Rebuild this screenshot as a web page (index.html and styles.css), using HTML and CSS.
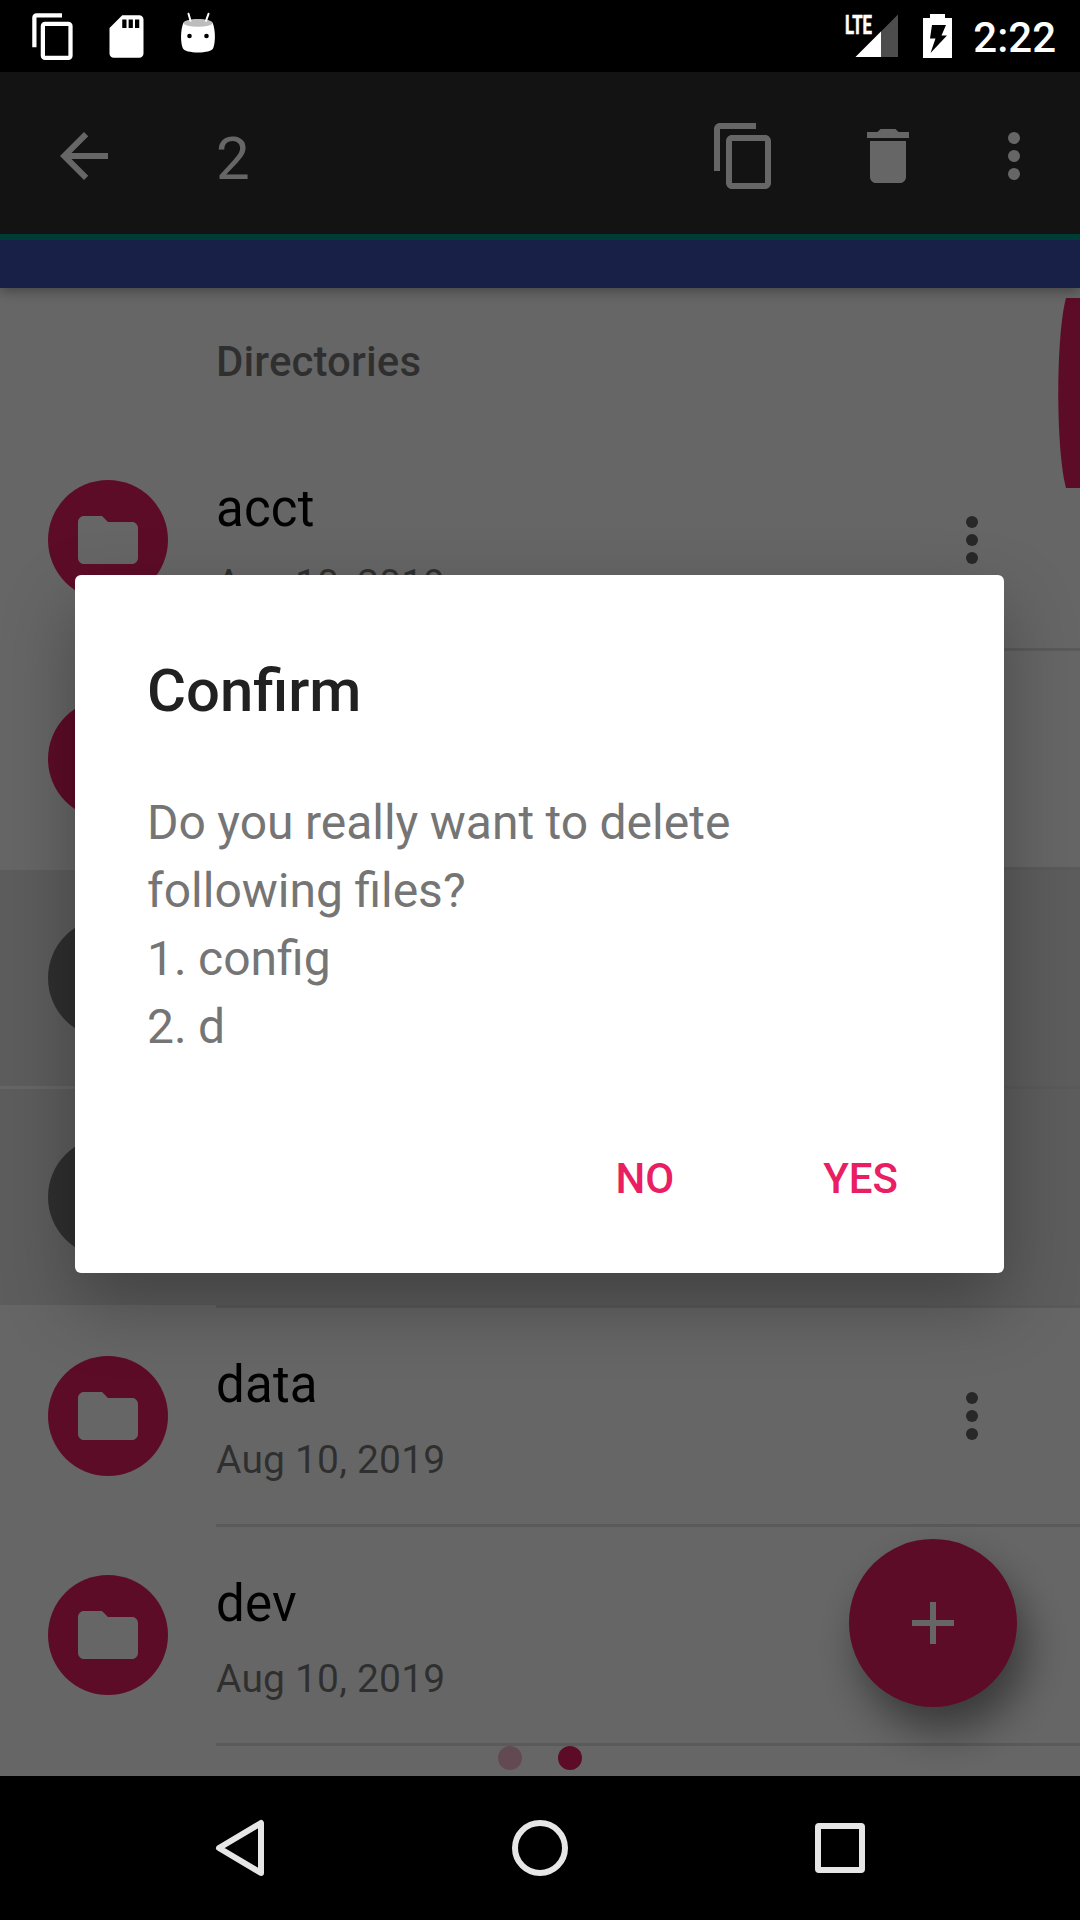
FILE: index.html
```html
<!DOCTYPE html>
<html lang="en">
<head>
<meta charset="utf-8">
<title>Confirm</title>
<link rel="stylesheet" href="styles.css">
</head>
<body>
<svg class="defs" width="0" height="0" aria-hidden="true">
  <symbol id="copy" viewBox="0 0 24 24"><path d="M16 1H4c-1.100 0-2 .9-2 2v14h2V3h12V1zm3 4H8c-1.100 0-2 .9-2 2v14c0 1.100.9 2 2 2h11c1.100 0 2-.9 2-2V7c0-1.100-.9-2-2-2zm0 16H8V7h11v14z"/></symbol>
  <symbol id="more" viewBox="0 0 24 24"><circle cx="12" cy="6" r="2"/><circle cx="12" cy="12" r="2"/><circle cx="12" cy="18" r="2"/></symbol>
  <symbol id="folder" viewBox="0 0 24 24"><path d="M10 4H4c-1.100 0-2 .9-2 2v12c0 1.100.9 2 2 2h16c1.100 0 2-.9 2-2V8c0-1.100-.9-2-2-2h-8l-2-2z"/></symbol>
  <symbol id="check" viewBox="0 0 24 24"><path d="M9 16.200 4.800 12l-1.400 1.400L9 19 21 7l-1.400-1.400z"/></symbol>
</svg>

<header class="status">
  <div class="status-group notifications">
    <svg class="note-icon"><use href="#copy"/></svg>
    <svg class="note-icon" viewBox="0 0 24 24"><path d="M18 2h-8L4 8v12c0 1.100.9 2 2 2h12c1.100 0 2-.9 2-2V4c0-1.100-.9-2-2-2zm-6 6h-2V4h2v4zm3 0h-2V4h2v4zm3 0h-2V4h2v4z"/></svg>
    <svg class="marshmallow" viewBox="0 0 36 42">
      <path d="M3.300 11C8 6 28 6 32.700 11C35.500 18 35.600 30 33.300 36C31.500 42 4.500 42 2.700 36C.4 30 .5 18 3.300 11z"/>
      <ellipse cx="18" cy="11" rx="14.500" ry="3.800" fill="#bdbdbd"/>
      <path d="M8.500 1.800l2 7M28.500 1.800l-2.500 7" stroke="#fff" stroke-width="2" stroke-linecap="round"/>
      <circle cx="9.500" cy="24" r="2.300" fill="#000"/><circle cx="26.500" cy="24" r="2.300" fill="#000"/>
    </svg>
  </div>
  <div class="status-group">
    <svg class="signal" viewBox="0 0 54 44">
      <path d="M53 0.500V43H10.500z" fill="#4d4d4d"/>
      <path d="M36 17.500V43H10.500z"/>
      <text class="lte" x="0" y="19.500" textLength="27" lengthAdjust="spacingAndGlyphs">LTE</text>
    </svg>
    <svg class="battery" viewBox="0 0 29 44">
      <path d="M7 0h15v4h7v40H0V4h7z"/>
      <path d="M9 11h14l-4.500 10.500H24L7.500 39l5-14.500H7z" fill="#000"/>
    </svg>
    <span class="clock">2:22</span>
  </div>
</header>

<main class="screen">
  <div class="appbar">
    <div class="toolbar">
      <svg class="icon" viewBox="0 0 24 24"><path d="M20 11H7.830l5.590-5.590L12 4l-8 8 8 8 1.410-1.410L7.830 13H20v-2z"/></svg>
      <span class="count">2</span>
      <svg class="icon"><use href="#copy"/></svg>
      <svg class="icon delete" viewBox="0 0 24 24"><path d="M6 19c0 1.100.9 2 2 2h8c1.100 0 2-.9 2-2V7H6v12zM19 4h-3.500l-1-1h-5l-1 1H5v2h14V4z"/></svg>
      <svg class="icon overflow"><use href="#more"/></svg>
    </div>
    <div class="path-bar"></div>
  </div>

  <div class="list">
    <h2 class="section">Directories</h2>
    <div class="row">
      <span class="avatar"><svg class="icon"><use href="#folder"/></svg></span>
      <div class="labels"><span class="name">acct</span><span class="date">Aug 10, 2019</span></div>
      <svg class="icon row-menu"><use href="#more"/></svg>
    </div>
    <div class="divider"></div>
    <div class="row">
      <span class="avatar"></span>
    </div>
    <div class="divider"></div>
    <div class="row selected">
      <span class="avatar"><svg class="icon"><use href="#check"/></svg></span>
    </div>
    <div class="divider"></div>
    <div class="row selected">
      <span class="avatar"><svg class="icon"><use href="#check"/></svg></span>
    </div>
    <div class="divider"></div>
    <div class="row">
      <span class="avatar"><svg class="icon"><use href="#folder"/></svg></span>
      <div class="labels"><span class="name">data</span><span class="date">Aug 10, 2019</span></div>
      <svg class="icon row-menu"><use href="#more"/></svg>
    </div>
    <div class="divider"></div>
    <div class="row">
      <span class="avatar"><svg class="icon"><use href="#folder"/></svg></span>
      <div class="labels"><span class="name">dev</span><span class="date">Aug 10, 2019</span></div>
    </div>
    <div class="divider"></div>
  </div>

  <svg class="scroll-handle" viewBox="0 0 22 190"><path d="M22 0H8C-2.300 38-2.300 152 8 190H22z"/></svg>
  <div class="pager"><span class="dot"></span><span class="dot active"></span></div>
  <div class="fab"><svg class="icon" viewBox="0 0 24 24"><path d="M19 13h-6v6h-2v-6H5v-2h6V5h2v6h6v2z"/></svg></div>

  <div class="scrim">
    <section class="dialog" role="dialog">
      <h1 class="dialog-title">Confirm</h1>
      <p class="message">Do you really want to delete<br>following files?<br>1. config<br>2. d</p>
      <div class="actions"><span>NO</span><span>YES</span></div>
    </section>
  </div>
</main>

<nav class="navbar">
  <svg class="icon" viewBox="0 0 72 72"><path d="M15 36 57 11V61z"/></svg>
  <svg class="icon" viewBox="0 0 72 72"><circle cx="36" cy="36" r="25"/></svg>
  <svg class="icon" viewBox="0 0 72 72"><rect x="14" y="14" width="44" height="44" rx="1"/></svg>
</nav>
</body>
</html>
```
FILE: styles.css
```css
* { box-sizing: border-box; }

body {
  margin: 0;
  width: 1080px;
  height: 1920px;
  display: flex;
  flex-direction: column;
  overflow: hidden;
  background: #000;
  font-family: Roboto, "Noto Sans", sans-serif;
}

h1, h2, p { margin: 0; font-weight: 400; }
svg { display: block; flex: none; }
.defs { position: absolute; }
.icon { width: 72px; height: 72px; fill: #fff; }

/* status bar */
.status {
  height: 72px;
  display: flex;
  justify-content: space-between;
  padding: 0 24px 0 28px;
  fill: #fff;
  color: #fff;
}
.status-group { display: flex; align-items: flex-start; }
.note-icon { width: 51px; height: 51px; margin: 11px 22px 0 0; }
.marshmallow { width: 36px; height: 42px; margin: 12px 0 0 6px; }
.signal { width: 54px; height: 44px; margin: 14px 24px 0 0; overflow: visible; }
.lte { font-size: 26px; font-weight: 700; stroke: #fff; stroke-width: .6px; }
.battery { width: 29px; height: 44px; margin: 14px 21px 0 0; }
.clock { font-size: 42px; line-height: 76px; font-weight: 500; }

/* app window */
.screen {
  position: relative;
  height: 1704px;
  overflow: hidden;
  background: #fff;
}
.appbar {
  position: relative;
  z-index: 1;
  box-shadow: 0 3px 12px rgba(0, 0, 0, .35);
}
.toolbar {
  height: 168px;
  display: flex;
  align-items: center;
  padding: 6px 30px 0 48px;
  background: #303030;
  border-bottom: 6px solid #009688;
}
.count { flex: 1; margin-left: 96px; color: #fff; font-size: 60px; line-height: 70px; padding-top: 5px; }
.delete { margin-left: 72px; }
.overflow { margin-left: 54px; }
.path-bar { height: 48px; background: #3f51b5; }

.section {
  height: 144px;
  padding: 2px 0 0 216px;
  color: rgba(0, 0, 0, .54);
  font-size: 42px;
  line-height: 144px;
  font-weight: 500;
  letter-spacing: .1px;
}
.row {
  height: 216px;
  display: flex;
  align-items: center;
  padding: 0 72px 0 48px;
}
.row.selected { background: #e8e8e8; }
.avatar {
  width: 120px;
  height: 120px;
  flex: none;
  display: flex;
  align-items: center;
  justify-content: center;
  border-radius: 50%;
  background: #e91e63;
}
.selected .avatar { background: #757575; }
.labels {
  align-self: stretch;
  flex: 1;
  margin-left: 48px;
  padding-top: 47px;
  display: flex;
  flex-direction: column;
  gap: 21px;
}
.name { color: #000; font-size: 51px; line-height: 60px; letter-spacing: .2px; }
.date { color: rgba(0, 0, 0, .54); font-size: 39px; line-height: 48px; letter-spacing: .18px; }
.row-menu { fill: #656565; }
.divider { height: 3px; margin-left: 216px; background: #e0e0e0; }

.scroll-handle {
  position: absolute;
  top: 226px;
  right: 0;
  width: 22px;
  height: 190px;
  fill: #e91e63;
}
.pager {
  position: absolute;
  left: 0;
  right: 0;
  bottom: 6px;
  display: flex;
  justify-content: center;
  gap: 36px;
}
.dot { width: 24px; height: 24px; border-radius: 50%; background: #e91e63; opacity: .32; }
.dot.active { opacity: 1; }
.fab {
  position: absolute;
  right: 63px;
  bottom: 69px;
  width: 168px;
  height: 168px;
  display: flex;
  align-items: center;
  justify-content: center;
  border-radius: 50%;
  background: #e91e63;
  box-shadow: 10px 24px 42px rgba(0, 0, 0, .44);
}

/* modal */
.scrim {
  position: absolute;
  inset: 0;
  z-index: 2;
  display: flex;
  align-items: center;
  padding: 0 76px 0 75px;
  background: rgba(0, 0, 0, .6);
}
.dialog {
  flex: 1;
  height: 698px;
  padding: 81px 106px 0 72px;
  border-radius: 6px;
  background: #fff;
  box-shadow: 0 30px 72px rgba(0, 0, 0, .3);
}
.dialog-title { color: #212121; font-size: 59.8px; line-height: 70px; font-weight: 500; }
.message { margin-top: 63px; color: #757575; font-size: 48px; line-height: 68px; word-spacing: -.5px; }
.actions {
  display: flex;
  justify-content: flex-end;
  gap: 149px;
  margin-top: 93px;
  color: #e91e63;
  font-size: 42px;
  line-height: 50px;
  font-weight: 500;
}

/* system navigation */
.navbar {
  height: 144px;
  display: flex;
  align-items: center;
  justify-content: space-between;
  padding: 0 204px;
}
.navbar .icon { fill: none; stroke: #e6e6e6; stroke-width: 6; stroke-linejoin: round; }
```
